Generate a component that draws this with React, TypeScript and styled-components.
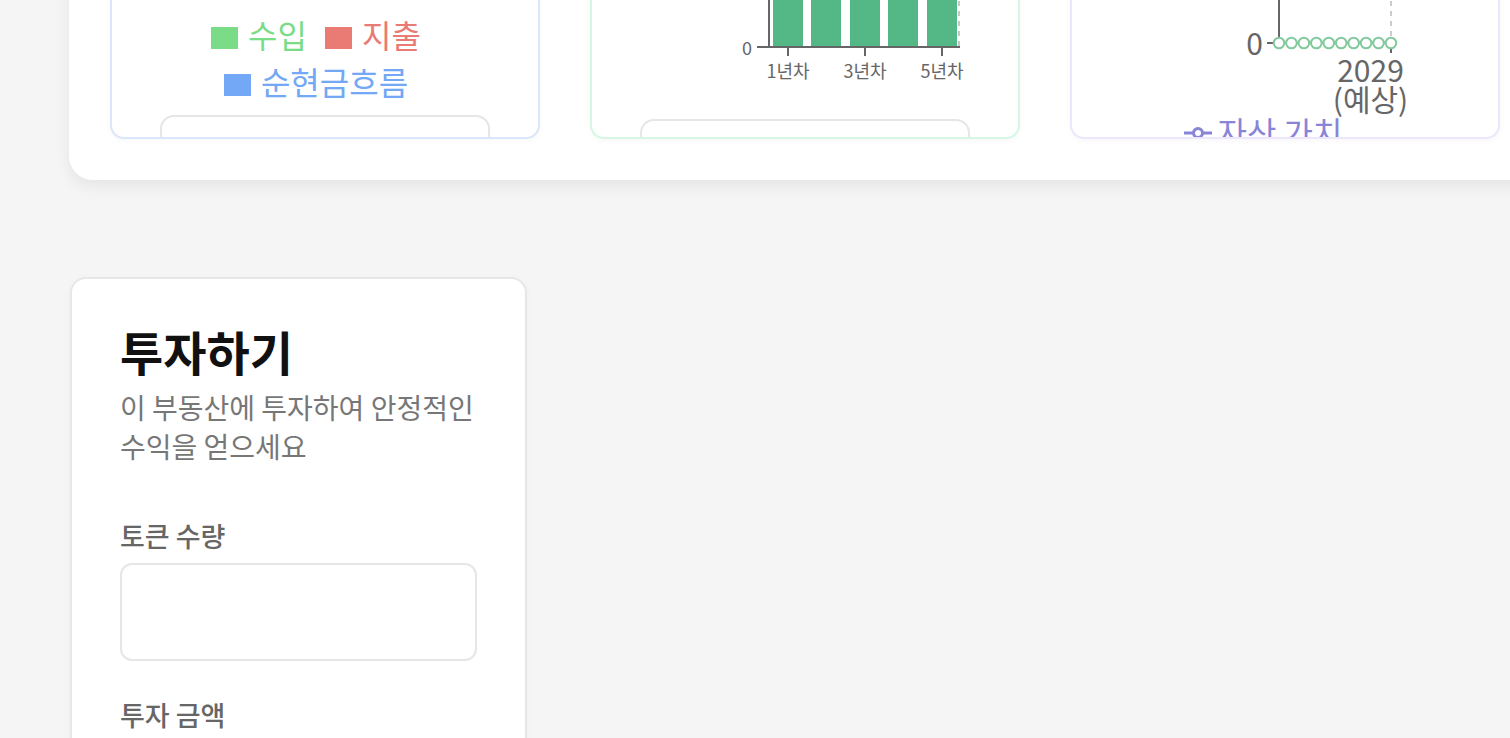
import React from "react";
import styled, { createGlobalStyle } from "styled-components";

const GlobalStyle = createGlobalStyle`
  html, body {
    margin: 0;
    padding: 0;
    background: #f5f5f5;
    overflow: hidden;
    font-family: "Noto Sans CJK KR", "Noto Sans", sans-serif;
  }
  * { box-sizing: border-box; }
`;

const Page = styled.div`
  display: flex;
  flex-direction: column;
  align-items: flex-start;
  padding-left: 69px;
  margin-top: -302px;
`;

const TopCard = styled.section`
  width: 1480px;
  background: #ffffff;
  border-radius: 24px;
  box-shadow: 0 6px 16px rgba(0, 0, 0, 0.07);
  padding: 41px;
  display: grid;
  grid-template-columns: repeat(3, 430px);
  column-gap: 50px;
`;

const ChartCard = styled.div<{ $border: string }>`
  height: 400px;
  background: #ffffff;
  border: 2px solid ${(p) => p.$border};
  border-radius: 14px;
  box-shadow: 0 2px 6px rgba(0, 0, 0, 0.03);
  overflow: hidden;
  display: flex;
  flex-direction: column;
`;

const ChartSvg = styled.svg<{ $h: number }>`
  display: block;
  flex: none;
  width: 426px;
  height: ${(p) => p.$h}px;
  overflow: visible;
  font-family: "Noto Sans CJK KR", "Noto Sans", sans-serif;
`;

const Legend = styled.div<{ $shift?: number }>`
  display: flex;
  flex-wrap: wrap;
  justify-content: center;
  padding: 0 ${(p) => 20 + (p.$shift ?? 0)}px 0 20px;
  flex: none;
`;

const LegendItem = styled.div<{ $color: string; $lh: number; $gap: number }>`
  display: flex;
  align-items: center;
  gap: ${(p) => p.$gap}px;
  margin-right: 18px;
  color: ${(p) => p.$color};
  font-size: 32px;
  line-height: ${(p) => p.$lh}px;
  white-space: nowrap;
`;

const Swatch = styled.span<{ $color: string }>`
  display: block;
  width: 27px;
  height: 22px;
  margin-top: 6px;
  background: ${(p) => p.$color};
`;

const InnerBox = styled.div<{ $top: number }>`
  flex: none;
  margin: ${(p) => p.$top}px 48px 0 48px;
  height: 200px;
  border: 2px solid #e6e6e6;
  border-radius: 14px;
  background: #ffffff;
`;

const InvestCard = styled.section`
  margin-top: 97px;
  margin-left: 1px;
  width: 457px;
  background: #ffffff;
  border: 2px solid #e7e7e7;
  border-radius: 16px;
  box-shadow: 0 2px 8px rgba(0, 0, 0, 0.03);
  padding: 42px 48px 60px;
`;

const Title = styled.h2`
  margin: 0;
  font-size: 47px;
  line-height: 60px;
  font-weight: 700;
  color: #111111;
`;

const Subtitle = styled.p`
  margin: 7px 0 0;
  font-size: 28px;
  line-height: 39px;
  color: #777777;
`;

const Form = styled.div`
  margin-top: 52px;
  display: flex;
  flex-direction: column;
  gap: 36px;
`;

const Field = styled.label`
  display: flex;
  flex-direction: column;
  gap: 9px;
`;

const FieldLabel = styled.span`
  font-size: 27px;
  line-height: 36px;
  font-weight: 500;
  color: #666666;
`;

const Input = styled.input`
  display: block;
  width: 100%;
  height: 98px;
  border: 2px solid #e6e6e6;
  border-radius: 12px;
  background: #ffffff;
  padding: 0 20px;
  font-size: 24px;
  font-family: inherit;
  outline: none;
`;

const AXIS = "#666666";

function CashFlowChart() {
  const bars = [40, 90, 140, 190, 240];
  return (
    <ChartSvg $h={270} viewBox="0 0 426 270">
      <line x1="70" y1="10" x2="70" y2="200" stroke={AXIS} strokeWidth="2" />
      <line x1="70" y1="200" x2="380" y2="200" stroke={AXIS} strokeWidth="2" />
      {bars.map((x) => (
        <rect key={x} x={x + 50} y="80" width="30" height="120" fill="#7bdc87" />
      ))}
    </ChartSvg>
  );
}

function RentChart() {
  const bars = [181, 219, 258, 296, 335];
  const ticks = [
    { x: 196, label: "1년차" },
    { x: 273, label: "3년차" },
    { x: 350, label: "5년차" },
  ];
  const base = 306;
  return (
    <ChartSvg $h={354} viewBox="0 0 426 354">
      {bars.map((x) => (
        <rect key={x} x={x} y={150} width="30" height={base - 150} fill="#53b886" />
      ))}
      <line x1="367" y1="0" x2="367" y2={base} stroke="#c8c8c8" strokeWidth="2" strokeDasharray="5 5" />
      <line x1="177" y1="0" x2="177" y2={base} stroke={AXIS} strokeWidth="2" />
      <line x1="171" y1="258" x2="177" y2="258" stroke={AXIS} strokeWidth="2" />
      <line x1="165" y1={base} x2="368" y2={base} stroke={AXIS} strokeWidth="2" />
      <text x="160" y={base + 8} textAnchor="end" fontSize="18" fill={AXIS}>
        0
      </text>
      {ticks.map((t) => (
        <g key={t.x}>
          <line x1={t.x} y1={base} x2={t.x} y2={base + 9} stroke={AXIS} strokeWidth="2" />
          <text x={t.x} y={base + 31} textAnchor="middle" fontSize="18" fill={AXIS}>
            {t.label}
          </text>
        </g>
      ))}
    </ChartSvg>
  );
}

function ValueChart() {
  const base = 302;
  const pts = Array.from({ length: 10 }, (_, i) => 207 + i * 12.44);
  return (
    <ChartSvg $h={370} viewBox="0 0 426 370">
      <line x1="319" y1="0" x2="319" y2={base} stroke="#cccccc" strokeWidth="2" strokeDasharray="5 5" />
      <line x1="207" y1="0" x2="207" y2={base} stroke={AXIS} strokeWidth="2" />
      <line x1="195" y1={base} x2="201" y2={base} stroke={AXIS} strokeWidth="2" />
      <line x1="319" y1={base + 4} x2="319" y2={base + 10} stroke={AXIS} strokeWidth="2" />
      <text x="191" y={base + 12} textAnchor="end" fontSize="30" fill={AXIS}>
        0
      </text>
      <line x1={pts[0]} y1={base} x2={pts[9]} y2={base} stroke="#82ca9d" strokeWidth="2" />
      {pts.map((x) => (
        <circle key={x} cx={x} cy={base} r="5.3" fill="#ffffff" stroke="#82ca9d" strokeWidth="2" />
      ))}
      <text x="298.5" y="341" textAnchor="middle" fontSize="30" fill={AXIS}>
        2029
      </text>
      <text x="298.5" y="370" textAnchor="middle" fontSize="30" fill={AXIS}>
        (예상)
      </text>
    </ChartSvg>
  );
}

function LineIcon() {
  return (
    <svg width="28" height="16" viewBox="0 0 28 16" style={{ marginTop: 4 }}>
      <line x1="0" y1="8" x2="28" y2="8" stroke="#8884d8" strokeWidth="3" />
      <circle cx="14" cy="8" r="4.5" fill="#ffffff" stroke="#8884d8" strokeWidth="3" />
    </svg>
  );
}

export default function App() {
  return (
    <>
      <GlobalStyle />
      <Page>
        <TopCard>
          <ChartCard $border="#dae6fb">
            <CashFlowChart />
            <Legend>
              <LegendItem $color="#7bdc87" $lh={47} $gap={10}>
                <Swatch $color="#7bdc87" />
                수입
              </LegendItem>
              <LegendItem $color="#ea7b74" $lh={47} $gap={10}>
                <Swatch $color="#ea7b74" />
                지출
              </LegendItem>
              <LegendItem $color="#72a8f5" $lh={47} $gap={10}>
                <Swatch $color="#72a8f5" />
                순현금흐름
              </LegendItem>
            </Legend>
            <InnerBox $top={10} />
          </ChartCard>
          <ChartCard $border="#d6f7e4">
            <RentChart />
            <InnerBox $top={24} />
          </ChartCard>
          <ChartCard $border="#ede6fd">
            <ValueChart />
            <Legend $shift={26}>
              <LegendItem $color="#8884d8" $lh={40} $gap={6}>
                <LineIcon />
                자산 가치
              </LegendItem>
            </Legend>
          </ChartCard>
        </TopCard>

        <InvestCard>
          <Title>투자하기</Title>
          <Subtitle>이 부동산에 투자하여 안정적인 수익을 얻으세요</Subtitle>
          <Form>
            <Field>
              <FieldLabel>토큰 수량</FieldLabel>
              <Input type="number" />
            </Field>
            <Field>
              <FieldLabel>투자 금액</FieldLabel>
              <Input type="number" />
            </Field>
          </Form>
        </InvestCard>
      </Page>
    </>
  );
}
